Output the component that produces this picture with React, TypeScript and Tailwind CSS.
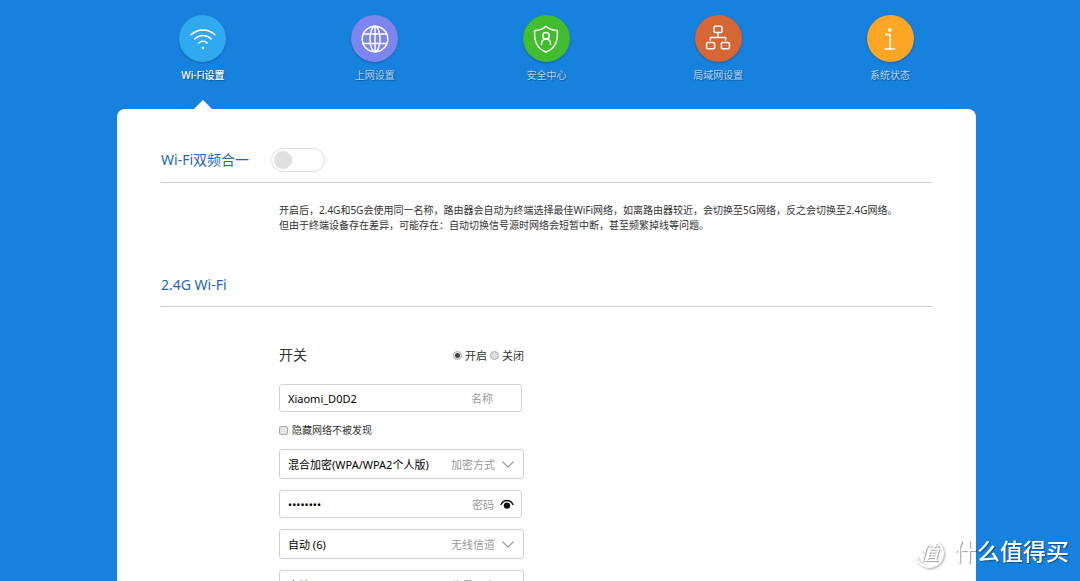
import { useState } from "react";
import type { ReactNode } from "react";

type Tab = {
  id: string;
  label: string;
  color: string;
  icon: ReactNode;
};

const iconProps = {
  width: 30,
  height: 30,
  viewBox: "0 0 30 30",
  fill: "none",
  stroke: "#fff",
  strokeWidth: 1.5,
  strokeLinecap: "round" as const,
  strokeLinejoin: "round" as const,
  "aria-hidden": true,
};

const tabs: Tab[] = [
  {
    id: "wifi",
    label: "Wi-Fi设置",
    color: "bg-[#30a9f1]",
    icon: (
      <svg {...iconProps}>
        <path d="M3 10.8C10 4.3 20 4.3 27 10.8" />
        <path d="M6.8 15C11.6 10.4 18.4 10.4 23.2 15" />
        <path d="M10.8 19C13.2 16.8 16.8 16.8 19.2 19" />
        <circle cx="15" cy="24" r="1.3" fill="#fff" stroke="none" />
      </svg>
    ),
  },
  {
    id: "internet",
    label: "上网设置",
    color: "bg-[#7d86ee]",
    icon: (
      <svg {...iconProps}>
        <circle cx="15" cy="15" r="12.8" />
        <ellipse cx="15" cy="15" rx="5" ry="12.8" />
        <path d="M15 2.2v25.6M3.5 10h23M3.5 19.5h23" />
      </svg>
    ),
  },
  {
    id: "security",
    label: "安全中心",
    color: "bg-[#41bd2d]",
    icon: (
      <svg {...iconProps}>
        <path d="M15 2.2C12 5 8 6.4 3.6 6.6C3.2 16.4 5 23.9 15 28C25 23.9 26.8 16.4 26.4 6.6C22 6.4 18 5 15 2.2Z" />
        <circle cx="15" cy="11.8" r="3.2" />
        <path d="M10.4 20.3C10.6 17.1 12.4 15.1 15 15.1S19.4 17.1 19.6 20.3" />
      </svg>
    ),
  },
  {
    id: "lan",
    label: "局域网设置",
    color: "bg-[#d86634]",
    icon: (
      <svg {...iconProps}>
        <rect x="11" y="2.2" width="8" height="6.2" rx="1.2" />
        <rect x="3.6" y="18.6" width="8" height="6.2" rx="1.2" />
        <rect x="18.4" y="18.6" width="8" height="6.2" rx="1.2" />
        <path d="M15 8.4v5M7.4 16v-2.6h15.2V16" />
      </svg>
    ),
  },
  {
    id: "status",
    label: "系统状态",
    color: "bg-[#fda524]",
    icon: (
      <svg {...iconProps}>
        <circle cx="14.8" cy="5.8" r="1.9" fill="#fff" stroke="none" />
        <path d="M10 10.4h5.2v14.6M9.6 25h10.6" strokeLinecap="butt" />
      </svg>
    ),
  },
];

function SectionTitle({ children }: { children: ReactNode }) {
  return <h2 className="text-sm leading-5 text-[#2268b8]">{children}</h2>;
}

function Chevron() {
  return (
    <svg width="14" height="14" viewBox="0 0 14 14" fill="none" stroke="#999" strokeWidth="1.2" aria-hidden>
      <path d="M1.5 4.8L7 10L12.5 4.8" />
    </svg>
  );
}

function SelectField({ label, options }: { label: string; options: string[] }) {
  return (
    <label className="flex h-[30px] w-[245px] items-center rounded-[3px] border border-[#d0d0d0] px-2 text-[11px]">
      <select className="h-full min-w-0 flex-1 appearance-none bg-transparent text-black outline-none">
        {options.map((o) => (
          <option key={o}>{o}</option>
        ))}
      </select>
      <span className="mr-1.5 text-[#999]">{label}</span>
      <Chevron />
    </label>
  );
}

export default function App() {
  const [active, setActive] = useState("wifi");
  const [merged, setMerged] = useState(false);
  const [power, setPower] = useState("on");
  const [hidden, setHidden] = useState(false);
  const [name, setName] = useState("Xiaomi_D0D2");
  const [password, setPassword] = useState("password");
  const [showPassword, setShowPassword] = useState(false);

  return (
    <div
      lang="zh-CN"
      className="min-h-screen bg-[#1781de] pt-[15px] pl-[13px] font-['Noto_Sans','Noto_Sans_CJK_SC',sans-serif] text-[10px] leading-[15px] text-[#333]"
    >
      <div className="mx-auto max-w-[859px]">
        <nav className="grid grid-cols-5">
          {tabs.map((tab) => (
            <button
              key={tab.id}
              type="button"
              onClick={() => setActive(tab.id)}
              className="flex flex-col items-center"
            >
              <span
                className={`flex size-[47px] items-center justify-center rounded-full shadow-[0_1px_2px_rgba(0,0,0,0.25)] ${tab.color}`}
              >
                {tab.icon}
              </span>
              <span
                className={`mt-1.5 [text-shadow:1px_1px_1px_rgba(0,0,0,0.35)] ${active === tab.id ? "font-medium text-white" : "text-[#b5d3f0]"}`}
              >
                {tab.label}
              </span>
              <svg
                width="18"
                height="9"
                viewBox="0 0 18 9"
                className={`mt-[17px] ${active === tab.id ? "" : "invisible"}`}
                aria-hidden
              >
                <path d="M0 9L9 0L18 9Z" fill="#fff" />
              </svg>
            </button>
          ))}
        </nav>

        <main className="rounded-t-lg bg-white px-11 pt-[39px] pb-12">
          <div className="flex items-center border-b border-[#ccc] pb-2.5">
            <SectionTitle>Wi-Fi双频合一</SectionTitle>
            <button
              type="button"
              role="switch"
              aria-checked={merged}
              aria-label="Wi-Fi双频合一"
              onClick={() => setMerged(!merged)}
              className={`ml-[22px] flex h-6 w-[54px] items-center rounded-full border border-[#ddd] px-0.5 ${merged ? "justify-end bg-[#1781de]" : "bg-white"}`}
            >
              <span className="size-[18px] rounded-full bg-[#e0e0e0]" />
            </button>
          </div>
          <p className="mt-5 ml-[118px]">
            开启后，2.4G和5G会使用同一名称，路由器会自动为终端选择最佳WiFi网络，如离路由器较近，会切换至5G网络，反之会切换至2.4G网络。
            <br />
            但由于终端设备存在差异，可能存在：自动切换信号源时网络会短暂中断，甚至频繁掉线等问题。
          </p>

          <div className="mt-[42px] border-b border-[#ccc] pb-[11px]">
            <SectionTitle>2.4G Wi-Fi</SectionTitle>
          </div>

          <form className="mt-[38px] ml-[118px] flex max-w-[245px] flex-col" onSubmit={(e) => e.preventDefault()}>
            <div className="flex items-center justify-between" role="radiogroup" aria-label="开关">
              <span className="text-sm leading-5">开关</span>
              <span className="flex items-center gap-[3px] text-[11px]">
                {[
                  { value: "on", text: "开启" },
                  { value: "off", text: "关闭" },
                ].map((o) => (
                  <label key={o.value} className="flex items-center gap-[3px]">
                    <input
                      type="radio"
                      name="power"
                      value={o.value}
                      checked={power === o.value}
                      onChange={() => setPower(o.value)}
                      className="size-[9px] appearance-none rounded-full border border-[#aaa] bg-[#ddd] checked:bg-[radial-gradient(#444_0_2px,#eee_3px)]"
                    />
                    {o.text}
                  </label>
                ))}
              </span>
            </div>

            <label className="mt-[19px] flex h-7 w-[243px] items-center rounded-[3px] border border-[#d0d0d0] pr-7 pl-2 text-[11px]">
              <input
                value={name}
                onChange={(e) => setName(e.target.value)}
                className="min-w-0 flex-1 text-black outline-none"
              />
              <span className="text-[#999]">名称</span>
            </label>

            <label className="mt-[11px] flex items-center gap-1">
              <input
                type="checkbox"
                checked={hidden}
                onChange={(e) => setHidden(e.target.checked)}
                className="size-[9px] appearance-none rounded-[2px] border border-[#aaa] bg-[#e4e4e4] checked:bg-[#666]"
              />
              隐藏网络不被发现
            </label>

            <div className="mt-[11px] flex flex-col gap-[11px]">
              <SelectField label="加密方式" options={["混合加密(WPA/WPA2个人版)", "强加密(WPA2个人版)", "无加密"]} />
              <div className="flex h-7 w-[243px] items-center rounded-[3px] border border-[#d0d0d0] pr-[7px] pl-2 text-[11px]">
                <input
                  id="password"
                  type={showPassword ? "text" : "password"}
                  value={password}
                  onChange={(e) => setPassword(e.target.value)}
                  className="min-w-0 flex-1 text-black outline-none"
                />
                <label htmlFor="password" className="mr-1.5 text-[#999]">
                  密码
                </label>
                <button type="button" aria-label="显示密码" onClick={() => setShowPassword(!showPassword)}>
                  <svg width="14" height="12" viewBox="0 0 14 12" fill="none" aria-hidden>
                    <path d="M0.8 7C3.4 1 10.6 1 13.2 7" stroke="#111" strokeWidth="1.4" />
                    <circle cx="7" cy="7.6" r="3.2" fill="#111" />
                  </svg>
                </button>
              </div>
              <SelectField label="无线信道" options={["自动 (6)", "1", "6", "11"]} />
              <SelectField label="信号强度" options={["穿墙", "标准", "节能"]} />
            </div>
          </form>
        </main>
      </div>

      <div className="pointer-events-none fixed right-[11px] bottom-2.5 flex items-center gap-2.5 text-white [text-shadow:1px_1px_1px_rgba(0,0,0,0.4)]">
        <span className="relative flex size-[30px] items-center justify-center text-[20px] leading-6 italic">
          <svg
            width="30"
            height="30"
            viewBox="0 0 30 30"
            fill="none"
            className="absolute inset-0 drop-shadow-[1px_1px_1px_rgba(0,0,0,0.4)]"
            aria-hidden
          >
            <path d="M24 5A13.5 13.5 0 1 1 2.4 19" stroke="#fff" strokeWidth="1.8" strokeLinecap="round" />
          </svg>
          值
        </span>
        <span className="pb-1 text-[23px] leading-8 font-medium">什么值得买</span>
      </div>
    </div>
  );
}
